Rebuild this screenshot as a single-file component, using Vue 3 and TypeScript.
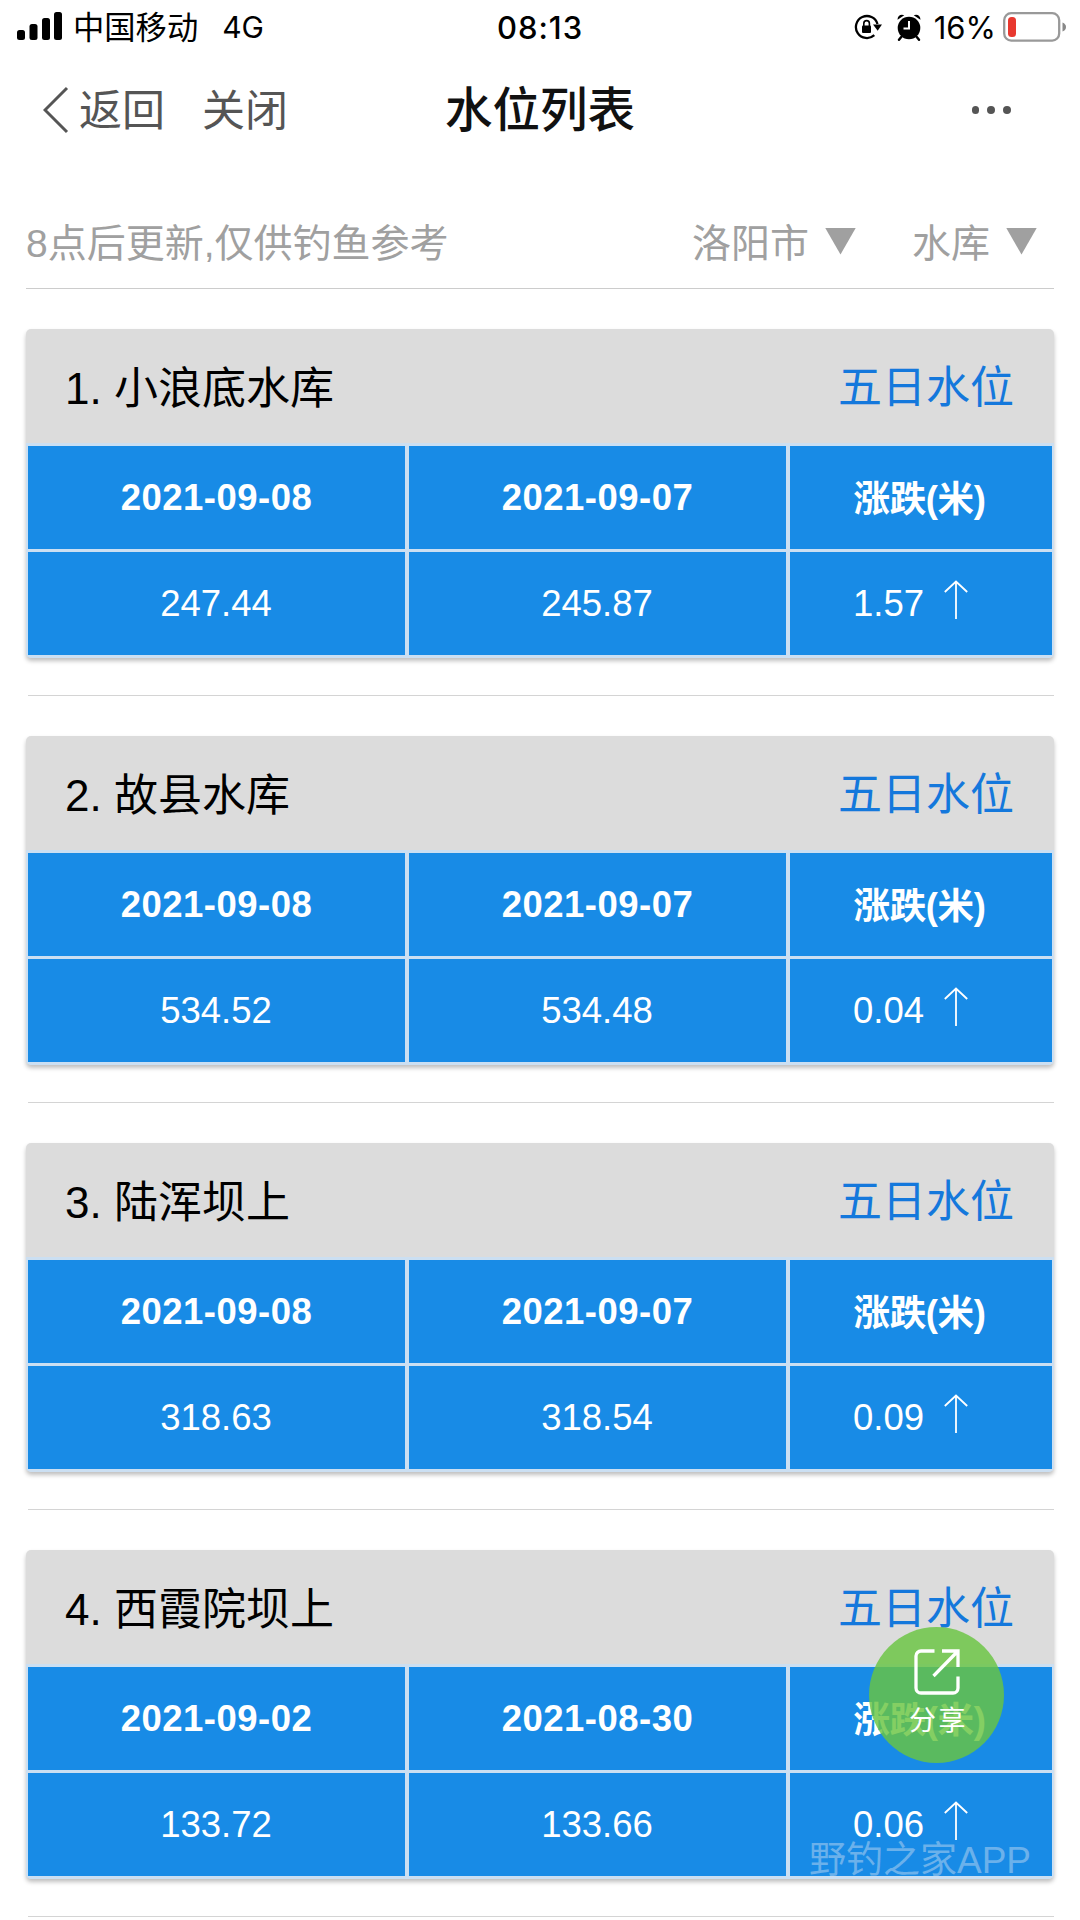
<script setup lang="ts">
interface Reservoir {
  name: string
  current: string
  previous: string
  currentLevel: string
  previousLevel: string
  change: string
}

const reservoirs: Reservoir[] = [
  { name: '小浪底水库', current: '2021-09-08', previous: '2021-09-07', currentLevel: '247.44', previousLevel: '245.87', change: '1.57' },
  { name: '故县水库', current: '2021-09-08', previous: '2021-09-07', currentLevel: '534.52', previousLevel: '534.48', change: '0.04' },
  { name: '陆浑坝上', current: '2021-09-08', previous: '2021-09-07', currentLevel: '318.63', previousLevel: '318.54', change: '0.09' },
  { name: '西霞院坝上', current: '2021-09-02', previous: '2021-08-30', currentLevel: '133.72', previousLevel: '133.66', change: '0.06' },
]
</script>

<template>
  <div class="screen">
    <header class="status">
      <div class="status-left">
        <svg class="signal" width="46" height="29" viewBox="0 0 46 29">
          <rect x="0" y="18" width="8" height="10" rx="2.5" />
          <rect x="12.5" y="12" width="8" height="16" rx="2.5" />
          <rect x="25" y="6" width="8" height="22" rx="2.5" />
          <rect x="37" y="0" width="8" height="28" rx="2.5" />
        </svg>
        <span class="carrier">中国移动</span>
        <span class="network">4G</span>
      </div>
      <div class="clock">08:13</div>
      <div class="status-right">
        <svg class="rotation" width="28" height="28" viewBox="0 0 28 28">
          <path d="M20.3 22.2A11 11 0 1 1 23.5 11" fill="none" stroke="#000" stroke-width="2.3" />
          <path d="M19 11.5h9l-4.3 6.3z" />
          <rect x="8" y="12.5" width="9" height="7.5" rx="1" />
          <path d="M9.8 13v-2.6a2.8 2.8 0 0 1 5.6 0V13" fill="none" stroke="#000" stroke-width="1.6" />
        </svg>
        <svg class="alarm" width="24" height="27" viewBox="0 0 24 27">
          <circle cx="12" cy="14" r="11.3" />
          <path d="M4.2 23l-2.2 2.8M19.8 23l2.2 2.8" stroke="#000" stroke-width="2.4" stroke-linecap="round" />
          <path d="M.6 5.8C.2 2.2 3.8-.6 7.3 1.3zM23.4 5.8C23.8 2.2 20.2-.6 16.7 1.3z" />
          <path d="M12 7v7.5H6.5" fill="none" stroke="#fff" stroke-width="2" />
        </svg>
        <span class="percent">16%</span>
        <svg class="battery" width="64" height="30" viewBox="0 0 64 30">
          <rect x="1.2" y="1.2" width="55" height="27.4" rx="7" fill="none" stroke="#999" stroke-width="2.3" />
          <rect x="5" y="5" width="8" height="20" rx="3.5" fill="#e8382f" />
          <path d="M59.5 10.5q3.5 1.5 3.5 4.5t-3.5 4.5z" fill="#888" />
        </svg>
      </div>
    </header>

    <nav class="navbar">
      <div class="nav-left">
        <svg class="chevron" width="26" height="48" viewBox="0 0 26 48">
          <path d="M24 2L2 24l22 22" fill="none" stroke="#555" stroke-width="3" />
        </svg>
        <span class="back">返回</span>
        <span class="close">关闭</span>
      </div>
      <h1>水位列表</h1>
      <div class="more"><i></i><i></i><i></i></div>
    </nav>

    <section class="filters">
      <span class="note">8点后更新,仅供钓鱼参考</span>
      <span class="filter city">洛阳市<i class="caret"></i></span>
      <span class="filter kind">水库<i class="caret"></i></span>
    </section>

    <main>
      <article v-for="(item, index) in reservoirs" :key="item.name" class="entry">
        <div class="card">
          <div class="card-head">
            <span class="name">{{ index + 1 }}. {{ item.name }}</span>
            <a class="link">五日水位</a>
          </div>
          <div class="grid">
            <div class="cell date">{{ item.current }}</div>
            <div class="cell date">{{ item.previous }}</div>
            <div class="cell label">涨跌(米)</div>
            <div class="cell">{{ item.currentLevel }}</div>
            <div class="cell">{{ item.previousLevel }}</div>
            <div class="cell change">
              <span>{{ item.change }}</span>
              <svg class="arrow" width="24" height="40" viewBox="0 0 24 40">
                <path d="M12 39V1.5M.8 12L12 1.5 23.2 12" fill="none" stroke="#fff" stroke-width="1.8" />
              </svg>
            </div>
          </div>
        </div>
      </article>
    </main>

    <button class="share">
      <svg width="46" height="46" viewBox="0 0 46 46" fill="none" stroke="#fff" stroke-width="3.3">
        <path d="M20.5 2H7a5 5 0 0 0-5 5v32a5 5 0 0 0 5 5h32a5 5 0 0 0 5-5V27.5" />
        <path d="M28 2h16v16M43.5 2.5L19.5 27" />
      </svg>
      <span>分享</span>
    </button>
    <div class="watermark">野钓之家APP</div>
  </div>
</template>

<style>
body {
  margin: 0;
  background: #fff;
}
</style>

<style scoped>
.screen {
  position: relative;
  width: 1080px;
  height: 1920px;
  overflow: hidden;
  background: #fff;
  color: #000;
  font-family: "Liberation Sans", "Noto Sans CJK SC", sans-serif;
  white-space: nowrap;
}

.status {
  display: grid;
  grid-template-columns: 1fr auto 1fr;
  align-items: center;
  height: 54px;
  font-family: Inter, "Noto Sans CJK SC", sans-serif;
  font-size: 30px;
}
.status-left,
.status-right {
  display: flex;
  align-items: center;
}
.status-left {
  padding-left: 17px;
}
.signal {
  margin-top: -1px;
}
.carrier {
  margin-left: 10px;
  margin-top: -3px;
  font-size: 31.3px;
}
.network {
  margin-left: 24px;
}
.clock {
  font-size: 31px;
  font-weight: 500;
  letter-spacing: 1px;
}
.status-right {
  justify-content: flex-end;
  padding-right: 13px;
}
.alarm {
  margin-left: 15px;
}
.percent {
  margin-left: 13px;
  font-size: 31px;
}
.battery {
  margin-left: 7px;
  margin-top: -1px;
}

.navbar {
  display: grid;
  grid-template-columns: 1fr auto 1fr;
  align-items: center;
  height: 112px;
  color: #555;
}
.nav-left {
  display: flex;
  align-items: center;
  padding-left: 43px;
  font-size: 43px;
}
.back,
.close {
  margin-top: -6px;
}
.back {
  margin-left: 10px;
}
.close {
  margin-left: 37px;
}
h1 {
  margin: -7px 0 0;
  color: #111;
  font-size: 47.5px;
  font-weight: 500;
}
.more {
  display: flex;
  justify-content: flex-end;
  gap: 8px;
  padding-right: 69px;
}
.more i {
  width: 7.8px;
  height: 7.8px;
  border-radius: 50%;
  background: #555;
}

.filters {
  display: flex;
  align-items: center;
  box-sizing: border-box;
  height: 91px;
  margin: 32px 26px 0;
  padding-bottom: 7px;
  border-bottom: 1px solid #ccc;
  color: #a0a0a0;
  font-size: 39px;
}
.note {
  flex: 1;
}
.filter {
  display: flex;
  align-items: center;
}
.kind {
  margin-left: 56px;
  margin-right: 17px;
}
.caret {
  width: 31px;
  height: 27px;
  margin-left: 16px;
  margin-top: 3px;
  background: #a0a0a0;
  clip-path: polygon(0 0, 100% 0, 50% 100%);
}

.entry {
  height: 367px;
  padding-top: 40px;
  margin: 0 26px;
  background: linear-gradient(#d4d4d4, #d4d4d4) 2px 100% / 100% 1px no-repeat;
}
.card {
  height: 329px;
  border-radius: 5px;
  background: #dcdcdc;
  box-shadow: 0 3px 4px rgba(0, 0, 0, 0.25);
  overflow: hidden;
}
.card-head {
  display: flex;
  align-items: center;
  justify-content: space-between;
  height: 114px;
  padding: 0 40px 0 39px;
  font-size: 44px;
}
.name {
  margin-top: -2px;
}
.link {
  margin-top: -4px;
  color: #1478dc;
}
.grid {
  display: grid;
  grid-template-columns: 377px 377px 262px;
  grid-template-rows: 103px 103px;
  column-gap: 4px;
  row-gap: 3px;
  padding: 3px 2px;
  background: #cbdff2;
}
.cell {
  display: flex;
  align-items: center;
  justify-content: center;
  box-sizing: border-box;
  padding-right: 1px;
  background: #188be6;
  color: #fff;
  font-size: 36.5px;
}
.date {
  padding-right: 0;
  font-weight: 700;
  letter-spacing: 0.5px;
}
.label {
  padding-right: 3px;
  padding-bottom: 3px;
  font-weight: 700;
  letter-spacing: -0.4px;
}
.change {
  padding-right: 21px;
}
.arrow {
  margin-left: 20px;
  margin-top: -8px;
}

.share {
  position: absolute;
  left: 869px;
  top: 1627px;
  display: flex;
  flex-direction: column;
  align-items: center;
  width: 135px;
  height: 136px;
  padding: 22px 0 0;
  border: 0;
  border-radius: 50%;
  background: rgba(105, 196, 65, 0.82);
  color: #fff;
  font-family: inherit;
}
.share span {
  margin-top: 7px;
  margin-left: 4px;
  font-size: 27px;
  line-height: 38px;
  letter-spacing: 2.5px;
}
.watermark {
  position: absolute;
  left: 809px;
  top: 1835px;
  color: rgba(190, 215, 240, 0.5);
  font-size: 37px;
  line-height: 52px;
}
</style>
